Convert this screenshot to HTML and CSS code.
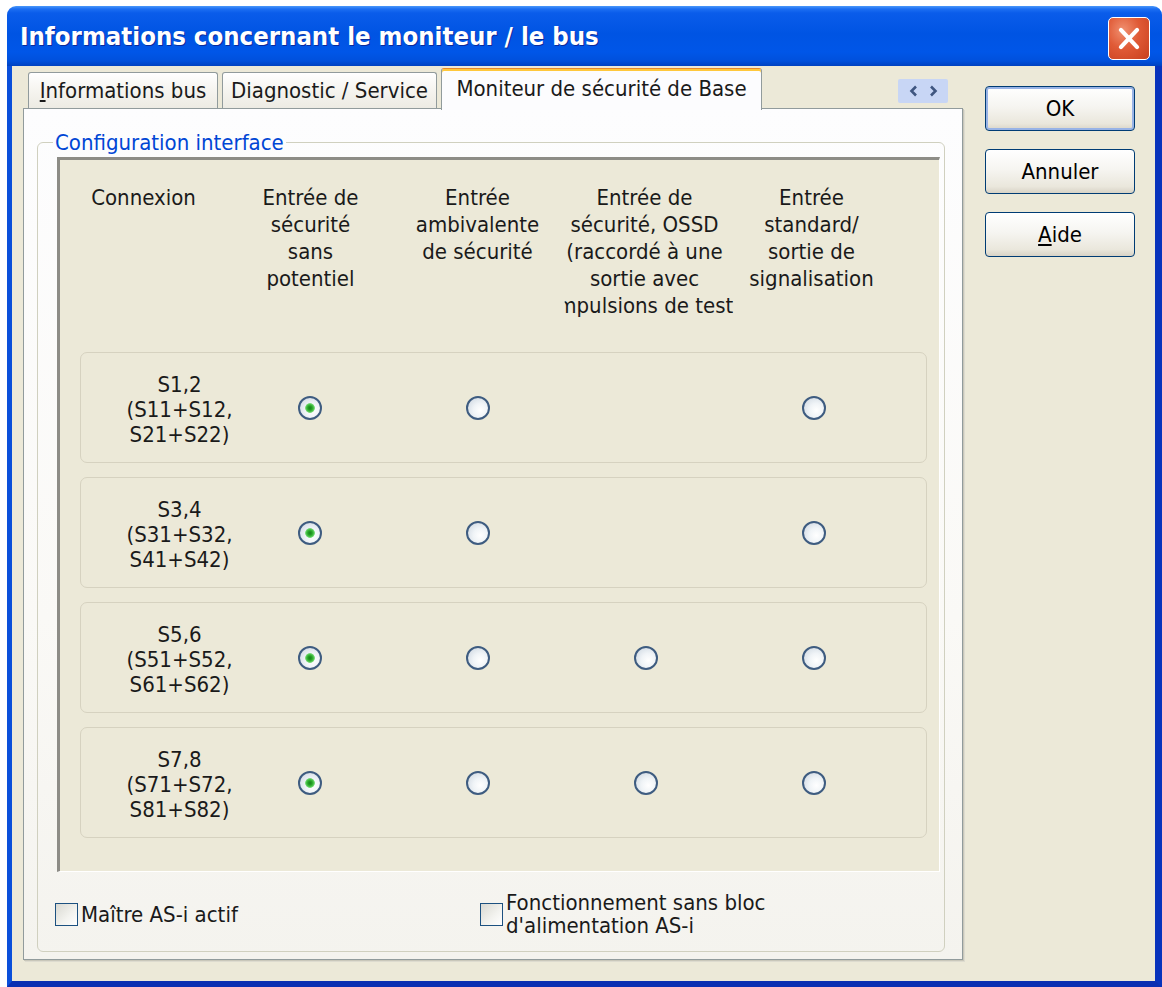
FILE: index.html
```html
<!DOCTYPE html>
<html lang="fr">
<head>
<meta charset="utf-8">
<title>Informations concernant le moniteur / le bus</title>
<link rel="stylesheet" href="styles.css">
</head>
<body>
<div class="window">
  <div class="titlebar">
    <span class="title">Informations concernant le moniteur / le bus</span>
    <span class="close" aria-label="Fermer">
      <svg viewBox="0 0 42 43" width="42" height="43"><path d="M12.5 12.5 L29.5 30.5 M29.5 12.5 L12.5 30.5" stroke="#fff" stroke-width="4.4" stroke-linecap="round" fill="none"/></svg>
    </span>
  </div>
  <div class="dlg">
    <div class="tabctl">
      <div class="tabs">
        <div class="tab t1"><u>I</u>nformations bus</div>
        <div class="tab t2">Diagnostic / Service</div>
        <div class="tab t3 active">Moniteur de sécurité de Base</div>
        <div class="scroller">
          <svg viewBox="0 0 50 24" width="50" height="24"><path d="M18 7.5 L13.5 12 L18 16.5" stroke="#3F5680" stroke-width="2.6" fill="none"/><path d="M33 7.5 L37.5 12 L33 16.5" stroke="#3F5680" stroke-width="2.6" fill="none"/></svg>
        </div>
      </div>
      <div class="panel">
        <fieldset class="group">
          <legend>Configuration interface</legend>
          <div class="inner">
            <div class="head">
              <div class="hcell"><span>Connexion</span></div>
              <div class="hcell"><span>Entrée de</span><span>sécurité</span><span>sans</span><span>potentiel</span></div>
              <div class="hcell"><span>Entrée</span><span>ambivalente</span><span>de sécurité</span></div>
              <div class="hcell"><span>Entrée de</span><span>sécurité, OSSD</span><span>(raccordé à une</span><span>sortie avec</span><span class="clipl">impulsions de test</span></div>
              <div class="hcell"><span>Entrée</span><span>standard/</span><span>sortie de</span><span>signalisation</span></div>
            </div>
            <div class="rows">
              <div class="row">
                <div class="lbl"><span>S1,2</span><span>(S11+S12,</span><span>S21+S22)</span></div>
                <span class="radio on"></span>
                <span class="radio"></span>
                <span class="none"></span>
                <span class="radio"></span>
              </div>
              <div class="row">
                <div class="lbl"><span>S3,4</span><span>(S31+S32,</span><span>S41+S42)</span></div>
                <span class="radio on"></span>
                <span class="radio"></span>
                <span class="none"></span>
                <span class="radio"></span>
              </div>
              <div class="row">
                <div class="lbl"><span>S5,6</span><span>(S51+S52,</span><span>S61+S62)</span></div>
                <span class="radio on"></span>
                <span class="radio"></span>
                <span class="radio"></span>
                <span class="radio"></span>
              </div>
              <div class="row">
                <div class="lbl"><span>S7,8</span><span>(S71+S72,</span><span>S81+S82)</span></div>
                <span class="radio on"></span>
                <span class="radio"></span>
                <span class="radio"></span>
                <span class="radio"></span>
              </div>
            </div>
          </div>
          <div class="checks">
            <div class="chk chk1"><span class="box"></span><span>Maître AS-i actif</span></div>
            <div class="chk chk2"><span class="box"></span><span class="two">Fonctionnement sans bloc<br>d'alimentation AS-i</span></div>
          </div>
        </fieldset>
      </div>
    </div>
    <div class="buttons">
      <button class="btn def">OK</button>
      <button class="btn">Annuler</button>
      <button class="btn"><u>A</u>ide</button>
    </div>
  </div>
</div>
</body>
</html>
```

FILE: styles.css
```css
* { box-sizing: border-box; }
html, body { margin: 0; padding: 0; }
body {
  background: #fff;
  font-family: "DejaVu Sans Condensed", "DejaVu Sans", sans-serif;
  font-stretch: condensed;
  font-size: 22px;
  line-height: 27px;
  color: #1a1a1a;
  padding: 6px 0 0 7px;
  width: 1162px;
  height: 987px;
  overflow: hidden;
}
.window {
  width: 1155px;
  height: 981px;
  display: flex;
  flex-direction: column;
}
.titlebar {
  height: 60px;
  flex: none;
  display: flex;
  align-items: flex-start;
  justify-content: space-between;
  padding: 0 12px 0 13px;
  border-radius: 9px 9px 0 0;
  background: linear-gradient(180deg, #4A98FA 0px, #1C6EF2 3px, #0A5CEA 7px, #0054E3 28px, #0056E8 46px, #0050DC 55px, #0042C0 60px);
}
.title {
  font-weight: bold;
  font-size: 25.5px;
  line-height: 60px;
  color: #fff;
  text-shadow: 1px 1px 0 #0A2A9C;
  white-space: nowrap;
}
.close {
  margin-top: 11px;
  width: 42px;
  height: 43px;
  border: 1.5px solid #fff;
  border-radius: 5px;
  background: radial-gradient(ellipse at 35% 30%, #F09070 0%, #E05A36 45%, #C8401E 100%);
  display: flex;
  align-items: center;
  justify-content: center;
}
.close svg { display: block; }
.dlg {
  flex: 1;
  display: flex;
  background: #ECE9D8;
  border-left: 5px solid #0A4FDA;
  border-right: 7px solid #0833BC;
  border-bottom: 6px solid #0A2FB2;
  padding: 2px 0 0 11px;
}
.tabctl {
  width: 940px;
  display: flex;
  flex-direction: column;
}
.tabs {
  height: 40px;
  flex: none;
  display: flex;
  align-items: flex-end;
  padding-left: 5px;
  gap: 4px;
}
.tab {
  height: 36px;
  border: 1px solid #919B9C;
  border-bottom: none;
  border-radius: 3px 3px 0 0;
  background: linear-gradient(180deg, #FFFFFF 0%, #F7F6F2 40%, #EDEBE3 100%);
  text-align: center;
  padding-top: 4px;
  white-space: nowrap;
}
.t1 { width: 190px; }
.t2 { width: 215px; }
.t3 { width: 321px; }
.tab.active {
  height: 42px;
  margin-bottom: -2px;
  position: relative;
  z-index: 1;
  background: #FCFCFE;
  border-top: 1px solid #E68B2C;
  box-shadow: inset 0 2px 0 #FFC83C;
  padding-top: 6px;
}
.scroller {
  align-self: flex-start;
  margin: 11px 15px 0 auto;
  width: 50px;
  height: 24px;
  background: #C8D6F5;
  border-radius: 2px;
}
.scroller svg { display: block; }
.panel {
  height: 852px;
  border: 1px solid #919B9C;
  box-shadow: 1px 1px 0 #C9C7BA, 2px 2px 0 #DDDBCF;
  padding: 20px 17px 7px 13px;
  background: linear-gradient(180deg, #FDFDFE 0%, #FAF9F6 60%, #F4F3EE 100%);
}
.group {
  margin: 0;
  min-width: 0;
  border: 1px solid #D0D0BF;
  border-radius: 6px;
  padding: 1px 4px 14px 19px;
}
.group legend {
  padding: 0 2px;
  margin-left: -4px;
  color: #0046D5;
  line-height: 27px;
}
.inner {
  background: #ECE9D8;
  border-top: 3px solid #8D8C86;
  border-left: 3px solid #8D8C86;
  border-right: 1px solid #FFFFFF;
  border-bottom: 1px solid #FFFFFF;
  padding: 24px 0 33px 0;
}
.head {
  display: grid;
  grid-template-columns: repeat(5, 167px);
  height: 135px;
  margin-bottom: 33px;
}
.hcell {
  display: flex;
  flex-direction: column;
  align-items: center;
  white-space: nowrap;
}
.clipl {
  margin-left: -4px;
  clip-path: inset(0 0 0 13px);
}
.rows {
  display: flex;
  flex-direction: column;
  gap: 14px;
  margin: 0 12px 0 20px;
}
.row {
  height: 111px;
  border: 1px solid #D6D2C0;
  border-radius: 7px;
  display: grid;
  grid-template-columns: 145px repeat(4, 168px);
  align-items: center;
  justify-items: center;
}
.lbl {
  justify-self: stretch;
  display: flex;
  flex-direction: column;
  align-items: center;
  padding: 4px 0 0 52px;
  line-height: 25px;
  white-space: nowrap;
}
.radio {
  width: 24px;
  height: 24px;
  border-radius: 50%;
  border: 2px solid #3E5C80;
  background: radial-gradient(circle at 62% 62%, #FFFFFF 0%, #F0F4F7 40%, #C9D3DE 100%);
}
.radio.on {
  background:
    radial-gradient(circle, #17801A 0px, #24A024 2px, #45C045 3.5px, #7AD87A 4.5px, rgba(255,255,255,0) 5.2px),
    radial-gradient(circle at 62% 62%, #FFFFFF 0%, #F0F4F7 40%, #C9D3DE 100%);
}
.checks {
  display: flex;
  align-items: center;
  height: 46px;
  margin: 19px 0 0 -2px;
}
.chk {
  display: flex;
  align-items: center;
  gap: 3px;
  white-space: nowrap;
}
.chk1 { width: 425px; }
.two { line-height: 23px; }
.box {
  flex: none;
  width: 23px;
  height: 23px;
  border: 1px solid #1C5180;
  background: linear-gradient(135deg, #D9D9D2 0%, #F3F3EF 60%, #FFFFFF 100%);
}
.buttons {
  margin: 18px 0 0 22px;
  width: 150px;
  display: flex;
  flex-direction: column;
  gap: 18px;
}
.btn {
  height: 45px;
  font: inherit;
  color: #000;
  border: 1px solid #003C74;
  border-radius: 4px;
  padding: 0;
  background: linear-gradient(180deg, #FFFFFF 0%, #F6F5F1 45%, #EAE7DC 85%, #D8D3C6 100%);
}
.btn.def {
  box-shadow: inset 0 0 0 2px #98B3E6;
}
```
